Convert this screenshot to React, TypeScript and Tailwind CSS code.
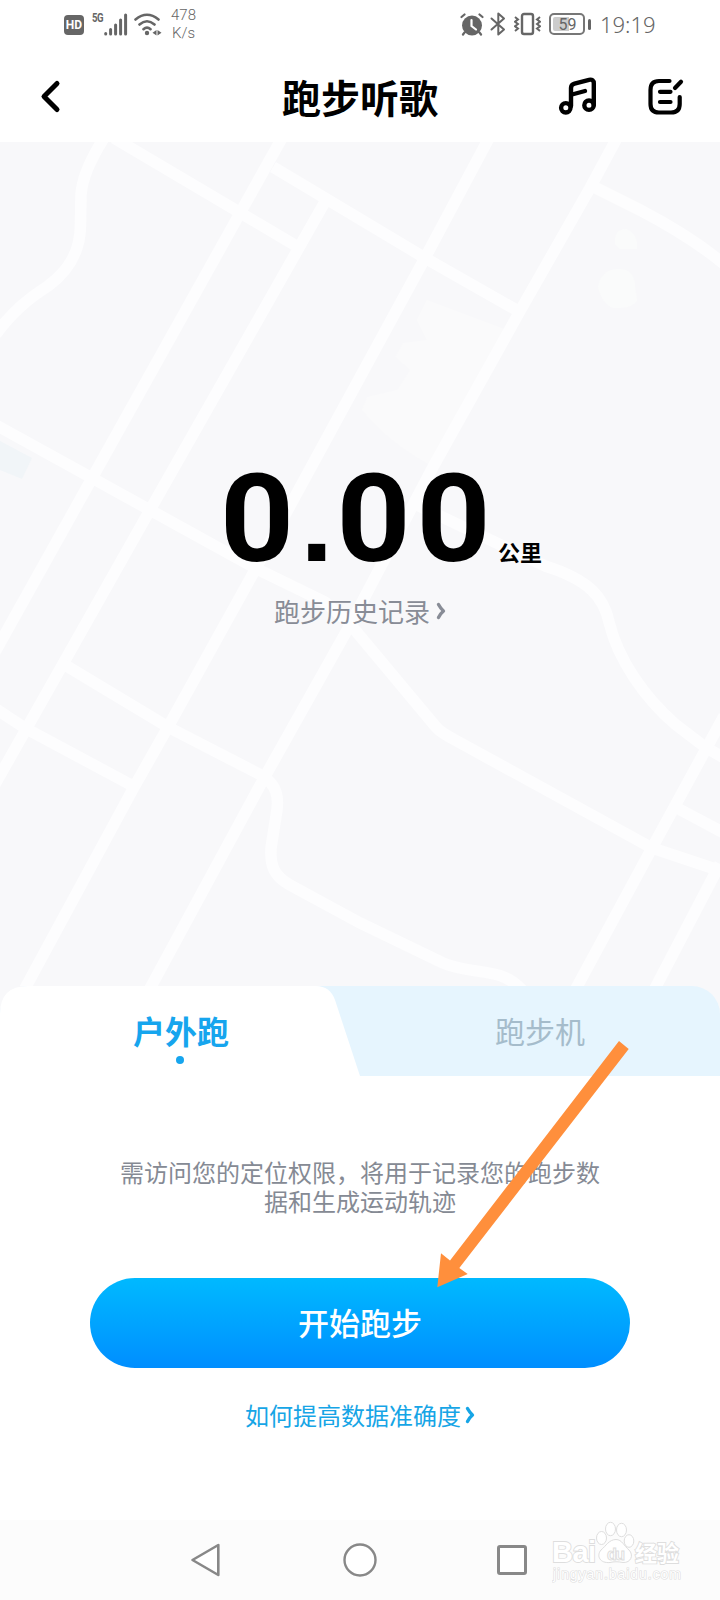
const roads = [
  "M104 138 C90 160 82 178 81 195 L80.5 222 C81 250 70 270 48 286 C28 299 12 312 -4 334",
  "M114 138 L239 212 L298 247",
  "M282 138 L-5 652",
  "M326 200 L150 510 L-6 786",
  "M273 167 L425 258 L520 312",
  "M489 138 L425 258 L255 570 L168 727 L133 789 L22 994",
  "M617 138 L590 188 L520 311 L433 467 L350 625 L263 780 L147 994",
  "M592 186 L640 210 Q690 236 724 264",
  "M-4 425 L92 478 L255 568 L325 602 L350 624 L436 727 Q440 732 455 740 L652 848 L724 872",
  "M415 504 L545 566 C590 580 604 598 609 622 C618 660 645 698 675 724 L705 747 L726 759",
  "M724 716 L652 848 L572 996",
  "M677 808 L724 833",
  "M720 864 L650 998",
  "M65 665 L168 727 L263 776 C276 785 280 796 276 816 L271 848 C270 866 274 876 290 885 L360 923 L443 963 C475 976 500 966 522 990",
  "M-4 709 L25 728 L133 786",
];

const MapBackground = () => (
  <svg className="absolute inset-0 h-full w-full" viewBox="0 142 720 844">
    <path
      d="M427 300 L507 330 L430 465 Q385 440 362 410 L367 397 L397 390 L410 370 L395 357 L403 343 L427 340 L417 320 Z"
      fill="#fafafb"
    />
    <path d="M615 244 Q614 229 626 229 Q638 233 637 249 H620 Z" fill="#fafbfb" />
    <path d="M598 288 Q600 270 617 269 Q634 268 635 285 L637 300 Q634 308 616 308 Q604 308 598 288 Z" fill="#fafbfb" />
    <path d="M0 441 L32 458 L22 479 L0 470 Z" fill="#f1f5f8" />
    <g fill="none" stroke="#fdfdfe" strokeWidth="11.5">
      {roads.map((d, index) => (
        <path key={index} d={d} />
      ))}
    </g>
  </svg>
);

const StatusBar = () => (
  <div className="flex h-12 items-center pl-16 text-[#666] font-['Roboto',sans-serif]">
    <div className="mt-[2px] flex h-5 w-5 items-center justify-center rounded bg-[#666] text-[12px] font-bold leading-none text-white">
      HD
    </div>
    <span className="mb-[13px] ml-2 w-3 text-[12px] font-bold leading-none tracking-[-0.5px]">
      <span className="inline-block origin-left scale-x-[0.8]">5G</span>
    </span>
    <svg className="mt-[1px] h-[23px] w-6" viewBox="0 0 24 23" fill="none" stroke="currentColor" strokeWidth="3" strokeLinecap="round">
      <path d="M1.7 20.5v.5M6.6 16.5v4.5M11.6 12v9M16.6 7v14M21.6 2v19" />
    </svg>
    <svg className="ml-1.5 mt-[1px] h-[23px] w-7" viewBox="0 0 28 23" fill="none" stroke="currentColor" strokeWidth="2.6" strokeLinecap="round">
      <path d="M1.5 6.5Q13 -3 24.5 6.5M5.5 11.5Q13 5 20.5 11.5M9.5 16.2Q13 13 16.5 16.2" />
      <circle cx="13" cy="20" r="2.2" fill="currentColor" stroke="none" />
      <path d="M22.5 17v5.5l-4-2.7zM23.5 17v5.5l4-2.8z" fill="currentColor" stroke="none" />
    </svg>
    <div className="ml-[9px] flex flex-col items-center text-[15px] font-light leading-[18px]">
      <span>478</span>
      <span>K/s</span>
    </div>
    <svg className="ml-[264px] h-[23px] w-6" viewBox="0 0 24 23" fill="none" stroke="currentColor" strokeLinecap="round">
      <circle cx="12" cy="12.5" r="10" fill="currentColor" stroke="none" />
      <path d="M1.5 4L4.5 1.5M22.5 4L19.5 1.5M4.5 19.5L3 21.5M19.5 19.5L21 21.5" strokeWidth="2.2" />
      <path d="M11.5 7v6l4.5 3.5" stroke="#fff" strokeWidth="2.2" />
    </svg>
    <svg className="ml-[6px] h-6 w-4" viewBox="0 0 16 24" fill="none" stroke="currentColor" strokeWidth="2" strokeLinejoin="round" strokeLinecap="round">
      <path d="M1.5 6.5L14 17.5L8.3 22.5V1.5L14 6.5L1.5 17.5" />
    </svg>
    <svg className="ml-2 h-6 w-[27px]" viewBox="0 0 27 24" fill="none" stroke="currentColor" strokeWidth="2">
      <rect x="8" y="2" width="11" height="20" rx="2" strokeWidth="2.4" />
      <path d="M1 5l3 2.4l-3 2.3l3 2.3l-3 2.3l3 2.3l-3 2.4M26 5l-3 2.4l3 2.3l-3 2.3l3 2.3l-3 2.3l3 2.4" />
    </svg>
    <div className="ml-2 flex h-[22px] w-9 rounded-[5px] border-2 border-[#777] p-0.5">
      <div className="h-full w-[17px] rounded-l-[2px] bg-[#ccc]" />
      <span className="-ml-[17px] w-[31px] pl-0.5 text-center text-[16px] leading-[15px]">59</span>
    </div>
    <div className="ml-[3px] h-[11px] w-[3px] rounded bg-[#666]" />
    <span className="ml-[9px] mt-[1px] text-[22px] font-light font-['Noto_Sans',sans-serif]">19:19</span>
  </div>
);

const Header = () => (
  <header className="grid h-[94px] grid-cols-[1fr_auto_1fr] items-center pt-0.5">
    <svg className="ml-10 h-9 w-6" viewBox="0 0 24 36" fill="none" stroke="#000" strokeWidth="5" strokeLinecap="round" strokeLinejoin="round">
      <path d="M17 5.5L4 18.5L17 31.5" />
    </svg>
    <h1 className="text-[39px] font-bold leading-none text-black">跑步听歌</h1>
    <div className="flex justify-end gap-12 pr-[34px]">
      <svg className="h-10 w-10" viewBox="558 76 40 40" fill="none" stroke="#000" strokeWidth="4.4" strokeLinecap="round">
        <circle cx="565.8" cy="107.8" r="4.7" />
        <circle cx="589" cy="105.2" r="4.7" />
        <path d="M571 106V88Q571 84.7 574.5 83.7L589 79.8Q593.8 79 593.8 83.5V105" />
        <path d="M572 94.5L585 91" />
      </svg>
      <svg className="h-10 w-10" viewBox="646 76 40 40" fill="none" stroke="#000" strokeWidth="4.2" strokeLinecap="round">
        <path d="M669.5 81H659Q650.5 81 650.5 90V104Q650.5 112.5 659 112.5H671Q679.7 112.5 679.7 104V97" />
        <path d="M660 91.8H670.5M660 102H670.5M675 88L681 81.8" />
      </svg>
    </div>
  </header>
);

const Chevron = () => (
  <svg className="h-[18px] w-[10px]" viewBox="0 0 10 18" fill="none" stroke="currentColor" strokeWidth="3.4" strokeLinecap="round" strokeLinejoin="round">
    <path d="M2.5 2.5Q5 7 7.5 9Q5 11 2.5 15.5" />
  </svg>
);

const Distance = () => (
  <section className="relative h-[844px] overflow-hidden bg-[#f8f8fa]">
    <MapBackground />
    <div className="relative pt-[321px]">
      <div className="flex h-[120px] items-baseline pl-[220px] text-black">
        <span className="w-[278px] origin-left scale-x-[1.05] whitespace-nowrap text-[123px] font-bold leading-[112px] tracking-[5.5px] font-['Roboto',sans-serif]">
          0
          <span className="text-[115px] leading-none tracking-[3px] font-['Liberation_Sans',sans-serif]">.</span>
          0<span className="tracking-normal">0</span>
        </span>
        <span className="text-[22px] font-bold leading-none">公里</span>
      </div>
      <a className="mt-[8px] flex items-center justify-center gap-1.5 text-[26px] leading-[40px] text-[#888c96]">
        跑步历史记录
        <Chevron />
      </a>
    </div>
  </section>
);

const Tabs = () => (
  <div className="bg-[#f8f8fa]">
    <div className="grid h-[90px] rounded-t-[28px] bg-[#e6f5fe]">
      <div className="col-start-1 row-start-1 w-[360px] bg-white [clip-path:path('M0_28Q0_0_28_0H316Q330_0_335_14L360_90H0Z')]" />
      <div className="relative col-start-1 row-start-1 grid grid-cols-2">
        <div className="flex flex-col items-center pt-[27px] text-[#16a5ee]">
          <span className="pl-0.5 text-[32px] font-bold leading-[34px]">户外跑</span>
          <span className="mt-[9px] h-2 w-2 rounded-full bg-[#16a5ee]" />
        </div>
        <div className="flex justify-center pt-[27px] text-[30px] leading-[34px] text-[#a5bccb]">跑步机</div>
      </div>
    </div>
  </div>
);

const Watermark = () => (
  <svg className="absolute left-[552px] top-[1520px] h-[66px] w-[134px]" viewBox="552 1520 134 66" fill="#fff" stroke="#dedede" strokeWidth="1">
    <g fontFamily="Liberation Sans, sans-serif" fontWeight="700" paintOrder="stroke" strokeWidth="1.8">
      <text x="552" y="1562" fontSize="29" textLength="44">Bai</text>
      <text x="635" y="1561" fontSize="22" fontFamily="Noto Sans CJK SC, sans-serif">经验</text>
    </g>
    <ellipse cx="601.5" cy="1538" rx="5" ry="6.5" />
    <ellipse cx="610.5" cy="1529" rx="5" ry="6.7" />
    <ellipse cx="621.5" cy="1530" rx="5" ry="6.7" />
    <ellipse cx="629" cy="1541" rx="4.8" ry="6.3" />
    <path d="M616 1539.5C622 1539.5 624 1546 629 1550C634 1555 631 1563 623 1562.5C618 1561.5 614 1561.5 610 1562.5C600 1563.5 596 1556 601 1550C606 1546 609 1539.5 616 1539.5Z" />
    <text x="607" y="1559.5" fontSize="16" fontWeight="700" textLength="18" fontFamily="Liberation Sans, sans-serif">du</text>
    <text x="553" y="1579" fontSize="14" textLength="128" strokeWidth="1.2" paintOrder="stroke" fontFamily="Liberation Sans, sans-serif">
      jingyan.baidu.com
    </text>
  </svg>
);

const NavBar = () => (
  <nav className="grid h-20 grid-cols-[131px_1fr_131px] items-center bg-[#fcfcfc] pl-[141px] pr-[143px]">
    <svg className="mx-auto h-9 w-9" viewBox="0 0 36 36" fill="#fff" stroke="#888" strokeWidth="2.6" strokeLinejoin="round">
      <path d="M29.3 3V33L3.5 18Z" />
    </svg>
    <svg className="mx-auto h-9 w-9" viewBox="-1 0 36 36" fill="#fff" stroke="#888" strokeWidth="2.4">
      <circle cx="18" cy="18" r="15.5" />
    </svg>
    <div className="mx-auto h-[30px] w-[30px] rounded-[3px] border-[3px] border-[#888] bg-white" />
  </nav>
);

const Arrow = () => (
  <svg className="absolute left-[430px] top-[1035px] h-[260px] w-[206px]" viewBox="430 1035 206 260">
    <path d="M619 1041L628.7 1049L459.3 1268L467.7 1274L437.3 1287.3L441 1253.3L450 1260.5Z" fill="#ff8f3c" />
  </svg>
);

export default function App() {
  return (
    <div className="relative flex h-[1600px] w-[720px] flex-col overflow-hidden bg-white font-['Noto_Sans_CJK_SC',sans-serif]">
      <StatusBar />
      <Header />
      <Distance />
      <Tabs />
      <main className="flex grow flex-col items-center pt-[81px]">
        <p className="w-[480px] text-center text-[24px] leading-[29px] text-[#858a94]">
          需访问您的定位权限，将用于记录您的跑步数据和生成运动轨迹
        </p>
        <button className="mt-[63px] h-[90px] w-[540px] rounded-full bg-linear-to-b from-[#00b9ff] to-[#008eff] pb-0.5 text-[31px] font-medium text-white">
          开始跑步
        </button>
        <a className="mt-[27px] flex items-center gap-1 text-[24px] leading-[40px] text-[#16a5e6]">
          如何提高数据准确度
          <Chevron />
        </a>
      </main>
      <NavBar />
      <Watermark />
      <Arrow />
    </div>
  );
}
